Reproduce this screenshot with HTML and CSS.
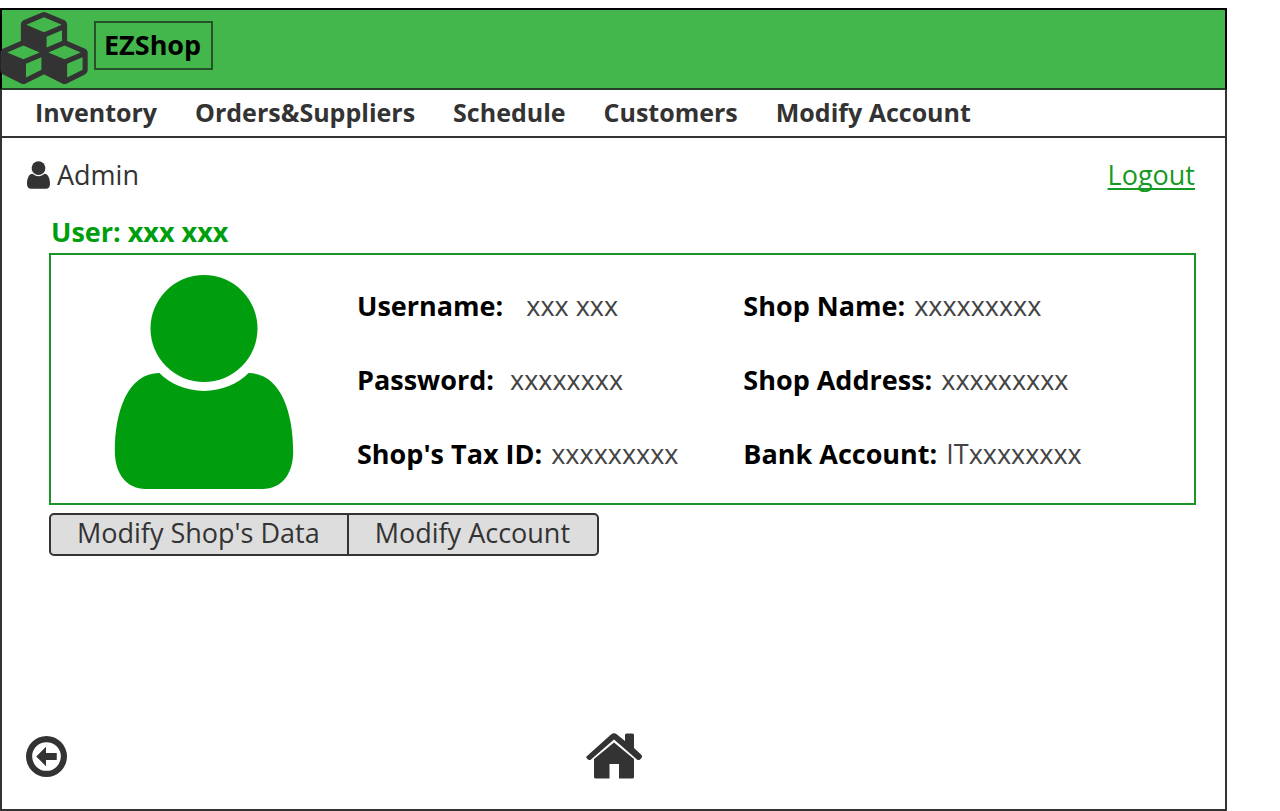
FILE: index.html
```html
<!DOCTYPE html>
<html lang="en">
<head>
<meta charset="utf-8">
<meta name="viewport" content="width=device-width, initial-scale=1">
<title>EZShop</title>
<link rel="stylesheet" href="styles.css">
</head>
<body>
<div class="page">
  <header class="banner">
    <svg class="logo" viewBox="0 0 2176 1792" aria-hidden="true"><path d="M640 1632l384-192v-314l-384 164v342zm-64-454l404-173-404-173-404 173zm1088 454l384-192v-314l-384 164v342zm-64-454l404-173-404-173-404 173zm-448-293l384-165v-266l-384 164v267zm-64-379l441-189-441-189-441 189zm1088 518v416q0 36-19 67t-52 47l-448 224q-25 14-57 14t-57-14l-448-224q-4-2-7-4-2 2-7 4l-448 224q-25 14-57 14t-57-14l-448-224q-33-16-52-47t-19-67v-416q0-38 21.500-70t56.500-48l434-186v-400q0-38 21.500-70t56.500-48l448-192q23-10 50-10t50 10l448 192q35 16 56.500 48t21.500 70v400l434 186q36 16 57 48t21 70z"/></svg>
    <h1 class="brand">EZShop</h1>
  </header>
  <nav class="menu">
    <a href="#">Inventory</a>
    <a href="#">Orders&amp;Suppliers</a>
    <a href="#">Schedule</a>
    <a href="#">Customers</a>
    <a href="#">Modify Account</a>
  </nav>
  <main class="content">
    <div class="session">
      <span class="role">
        <svg class="role-icon" viewBox="0 0 180 216" aria-hidden="true"><circle cx="90" cy="54" r="54"/><path d="M45 99C13 99 0 138 0 178C0 202 13 216 31 216H149C168 216 180 202 180 178C180 138 167 99 135 99C124 110 108 117 90 117C72 117 56 110 45 99Z"/></svg>
        Admin
      </span>
      <a class="logout" href="#">Logout</a>
    </div>
    <section class="profile">
      <h2 class="profile-title">User: xxx xxx</h2>
      <div class="card">
        <svg class="avatar" viewBox="0 0 180 216" aria-hidden="true"><circle cx="90" cy="54" r="54"/><path d="M45 99C13 99 0 138 0 178C0 202 13 216 31 216H149C168 216 180 202 180 178C180 138 167 99 135 99C124 110 108 117 90 117C72 117 56 110 45 99Z"/></svg>
        <dl class="fields">
          <div class="field"><dt>Username:&nbsp;&nbsp;</dt><dd>xxx xxx</dd></div>
          <div class="field"><dt>Shop Name:</dt><dd>xxxxxxxxx</dd></div>
          <div class="field"><dt>Password:&nbsp;</dt><dd>xxxxxxxx</dd></div>
          <div class="field"><dt>Shop Address:</dt><dd>xxxxxxxxx</dd></div>
          <div class="field"><dt>Shop's Tax ID:</dt><dd>xxxxxxxxx</dd></div>
          <div class="field"><dt>Bank Account:</dt><dd>ITxxxxxxxx</dd></div>
        </dl>
      </div>
      <div class="actions">
        <button class="action" type="button">Modify Shop's Data</button>
        <button class="action" type="button">Modify Account</button>
      </div>
    </section>
  </main>
  <footer class="footer">
    <button class="icon-button" type="button" aria-label="Back">
      <svg class="back-icon" viewBox="0 0 40 40" aria-hidden="true"><path fill-rule="evenodd" d="M20 0a20 20 0 1 1 0 40a20 20 0 1 1 0-40ZM20 6a14 14 0 1 0 0 28a14 14 0 1 0 0-28Z"/><path d="M10 20L19.500 10.500V16.500H30V23.500H19.500V29.500Z"/></svg>
    </button>
    <button class="icon-button home" type="button" aria-label="Home">
      <svg class="home-icon" viewBox="0 0 56 46" aria-hidden="true"><path d="M8 26L28 9.500L48 26V44Q48 45.500 46.500 45.500H33V31H23.500V45.500H10Q8 45.500 8 44Z"/><path d="M0.500 23.500L25 1.500Q28 -1 31 1.500L39 8V2Q39 0.500 40.500 0.500H46.500Q48 0.500 48 2V15L55.500 22Q56.500 23.500 55.500 25L54 26.500Q52.500 27.500 51 26.500L28 6.500L5 26.500Q3.500 27.500 2 26.500L0.500 25Q0 24.300 0.500 23.500Z"/></svg>
    </button>
    <span></span>
  </footer>
</div>
</body>
</html>
```
FILE: styles.css
```css
* {
  box-sizing: border-box;
}

body {
  margin: 0;
  background: #fff;
  color: #333;
  font-family: "Open Sans", sans-serif;
  font-size: 27px;
  line-height: 38px;
}

svg {
  display: block;
  flex: none;
  fill: #333;
}

.page {
  display: flex;
  flex-direction: column;
  min-height: calc(100vh - 8px);
  margin: 8px 53px 0 0;
  border: 2px solid #333;
  border-top: 0;
}

.banner {
  display: flex;
  align-items: flex-start;
  gap: 6px;
  height: 82px;
  margin: 0 -2px;
  border: 2px solid #000;
  border-bottom-color: #263f28;
  background: #43b74b;
}

.logo {
  width: 88px;
  height: 72px;
  margin: 2px 0 0 -2px;
}

.brand {
  margin: 11px 0 0;
  padding: 3px 10px 4px 8px;
  border: 2px solid #26522a;
  color: #000;
  font-size: 27px;
  line-height: 38px;
}

.menu {
  display: flex;
  gap: 38px;
  height: 48px;
  padding: 3px 33px 0;
  border-bottom: 2px solid #333;
  font-size: 25px;
  font-weight: 700;
}

.menu a {
  color: #333;
  text-decoration: none;
}

.content {
  flex: 1;
  padding: 18px 30px 0 25px;
}

.session {
  display: flex;
  justify-content: space-between;
}

.role {
  display: flex;
  align-items: center;
  gap: 7px;
}

.role-icon {
  width: 23px;
  height: 28px;
}

.logout {
  color: #149a22;
  text-decoration-thickness: 2px;
  text-decoration-skip-ink: none;
  text-underline-offset: 3px;
}

.profile {
  margin: 19px -1px 0 22px;
}

.profile-title {
  margin: 0 0 2px 2px;
  color: #009e0f;
  font-size: 27px;
}

.card {
  display: flex;
  align-items: center;
  gap: 63px;
  padding: 20px 0 14px 63px;
  border: 2px solid #1a9427;
}

.avatar {
  width: 180px;
  height: 214px;
  fill: #009e0f;
}

.fields {
  display: grid;
  flex: 1;
  grid-template-columns: 6fr 7fr;
  row-gap: 36px;
  margin: 0;
  padding-bottom: 4px;
}

.field {
  display: flex;
  gap: 9px;
}

.field dt {
  color: #000;
  font-weight: 700;
}

.field dd {
  margin: 0;
  color: #444;
}

.actions {
  display: flex;
  margin-top: 8px;
}

.action {
  padding: 0 27px 3px 26px;
  border: 2px solid #333;
  border-radius: 5px 0 0 5px;
  background: #ddd;
  color: #333;
  font: inherit;
  line-height: 36px;
}

.action + .action {
  margin-left: -2px;
  border-radius: 0 5px 5px 0;
}

.footer {
  display: grid;
  grid-template-columns: 1fr auto 1fr;
  align-items: center;
  padding: 0 24px 30px;
}

.icon-button {
  justify-self: start;
  padding: 0;
  border: 0;
  background: none;
}

.back-icon {
  width: 41px;
  height: 41px;
}

.home-icon {
  width: 56px;
  height: 46px;
}
```
